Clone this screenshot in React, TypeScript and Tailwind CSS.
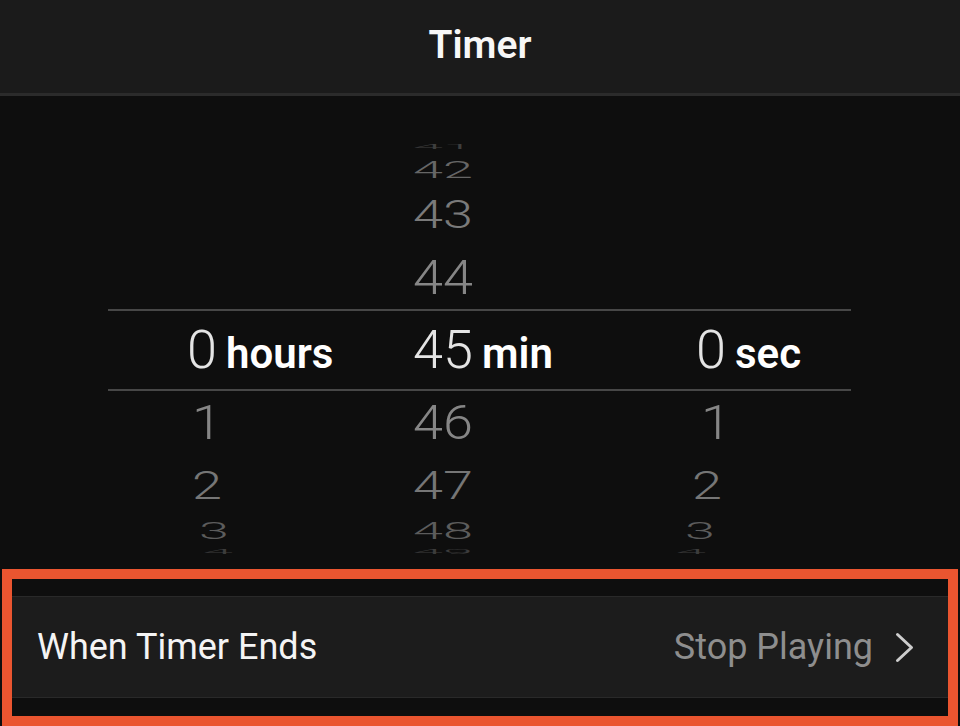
import React from "react";

type Cell = { value: string; shift?: string };

type WheelRow = {
  slot: string;
  tone: string;
  hours?: Cell;
  min: Cell;
  sec?: Cell;
};

// rows above the selection band (only the minutes wheel has values here)
const ABOVE: WheelRow[] = [
  { slot: "h-[20px]", tone: "scale-y-[0.12] text-[#3e3e3e]", min: { value: "41" } },
  { slot: "h-[26px]", tone: "scale-y-[0.45] text-[#666666]", min: { value: "42" } },
  { slot: "h-[64px]", tone: "scale-y-[0.71] text-[#7a7a7a]", min: { value: "43" } },
  { slot: "h-[62px]", tone: "scale-y-[0.9] text-[#868686]", min: { value: "44" } },
];

const BELOW: WheelRow[] = [
  {
    slot: "h-[64px]",
    tone: "scale-y-[0.9] text-[#868686]",
    hours: { value: "1", shift: "translate-x-[5px]" },
    min: { value: "46" },
    sec: { value: "1", shift: "translate-x-[5px]" },
  },
  {
    slot: "h-[62px]",
    tone: "scale-y-[0.71] text-[#767676]",
    hours: { value: "2", shift: "translate-x-[5px]" },
    min: { value: "47" },
    sec: { value: "2", shift: "-translate-x-[4px]" },
  },
  {
    slot: "h-[28px]",
    tone: "scale-y-[0.45] text-[#5c5c5c]",
    hours: { value: "3", shift: "translate-x-[12px]" },
    min: { value: "48" },
    sec: { value: "3", shift: "-translate-x-[11px]" },
  },
  {
    slot: "h-[14px]",
    tone: "scale-y-[0.12] text-[#3c3c3c]",
    hours: { value: "4", shift: "translate-x-[16px]" },
    min: { value: "49" },
    sec: { value: "4", shift: "-translate-x-[20px]" },
  },
];

function Digit({ cell, tone }: { cell?: Cell; tone: string }) {
  return (
    <span
      className={`block w-[100px] text-right text-[54px] font-light leading-none ${tone} ${
        cell?.shift ?? ""
      }`}
    >
      {cell?.value ?? ""}
    </span>
  );
}

function Row({ row }: { row: WheelRow }) {
  return (
    <div className={`ml-[108px] w-[743px] pl-[9px] flex items-center shrink-0 ${row.slot}`}>
      <div className="w-[256px]">
        <Digit cell={row.hours} tone={row.tone} />
      </div>
      <div className="w-[253px]">
        <Digit cell={row.min} tone={row.tone} />
      </div>
      <div className="flex-1">
        <Digit cell={row.sec} tone={row.tone} />
      </div>
    </div>
  );
}

function Selected({ value, unit, width }: { value: string; unit: string; width: string }) {
  return (
    <div className={`flex items-baseline ${width}`}>
      <span className="block w-[100px] text-right text-[54px] font-light leading-none text-[#e4e4e4]">
        {value}
      </span>
      <span className="ml-[9px] text-[42px] font-semibold leading-none text-white">{unit}</span>
    </div>
  );
}

export default function App() {
  return (
    <div className="w-[960px] h-[726px] overflow-hidden bg-[#0e0e0e] font-['Roboto',sans-serif]">
      {/* Header */}
      <div className="h-[96px] border-b-[3px] border-[#2b2b2b] bg-[#1b1b1b] flex items-center justify-center pb-[3px]">
        <h1 className="text-[39px] font-semibold leading-none text-[#f7f7f7]">Timer</h1>
      </div>

      {/* Wheel picker */}
      <div className="h-[473px] pt-[41px] flex flex-col overflow-hidden">
        {ABOVE.map((row) => (
          <Row key={row.min.value} row={row} />
        ))}

        <div className="ml-[108px] w-[743px] h-[82px] shrink-0 pl-[9px] border-y-2 border-[#474747] flex items-center">
          <Selected value="0" unit="hours" width="w-[256px]" />
          <Selected value="45" unit="min" width="w-[253px]" />
          <Selected value="0" unit="sec" width="flex-1" />
        </div>

        {BELOW.map((row) => (
          <Row key={row.min.value} row={row} />
        ))}
      </div>

      {/* Highlighted settings row */}
      <div className="mx-[2px] h-[157px] border-[10px] border-[#ea5530] flex flex-col">
        <div className="h-[17px] shrink-0" />
        <div className="h-[102px] shrink-0 border-y border-[#292929] bg-[#1c1c1c] flex items-center pl-[25px] pr-[34px]">
          <span className="text-[36px] leading-none text-[#f4f4f4]">When Timer Ends</span>
          <span className="ml-auto text-[36px] leading-none text-[#8e8e8e]">Stop Playing</span>
          <svg
            viewBox="0 0 19 31"
            className="ml-[22px] w-[19px] h-[31px]"
            fill="none"
            stroke="#cdcdcd"
            strokeWidth={3}
            strokeLinecap="round"
            strokeLinejoin="round"
          >
            <path d="M2.5 2.5 L16.5 15.5 L2.5 28.5" />
          </svg>
        </div>
      </div>
    </div>
  );
}
